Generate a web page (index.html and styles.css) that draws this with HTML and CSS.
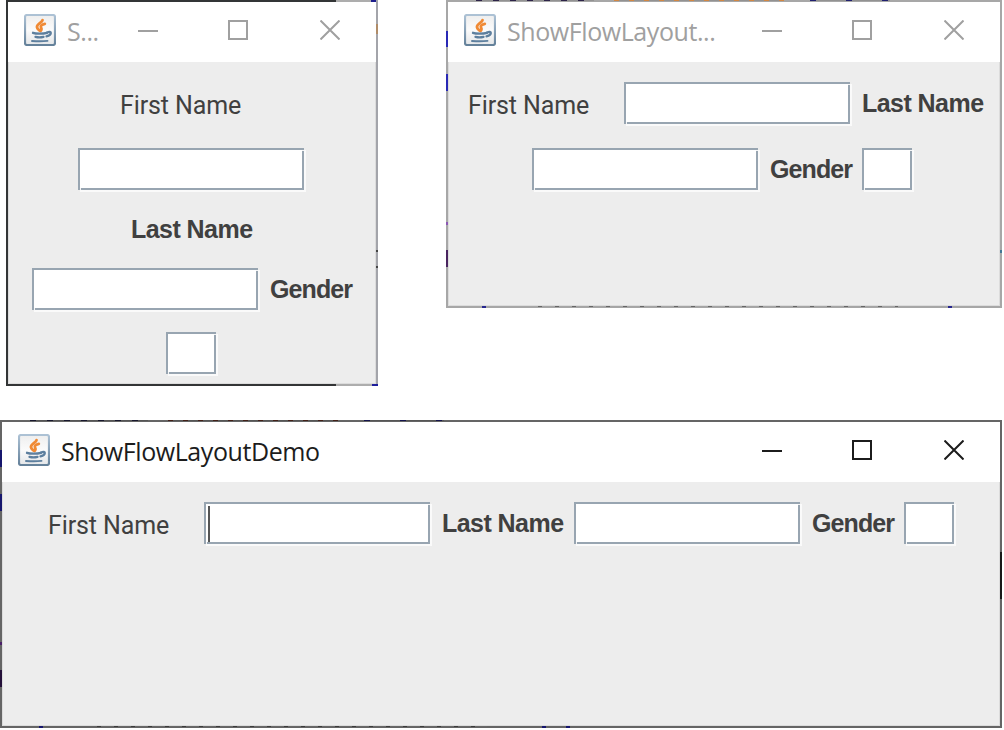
FILE: index.html
```html
<!DOCTYPE html>
<html lang="en">
<head>
<meta charset="utf-8">
<title>ShowFlowLayoutDemo</title>
<link rel="stylesheet" href="styles.css">
</head>
<body>
<svg class="defs" width="0" height="0">
  <defs>
    <linearGradient id="tile" x1="0" y1="0" x2="0" y2="1"><stop offset="0" stop-color="#eeeeee"/><stop offset=".5" stop-color="#fbfbfb"/><stop offset="1" stop-color="#e4e6e8"/></linearGradient>
    <linearGradient id="rim" x1="0" y1="0" x2="0" y2="1"><stop offset="0" stop-color="#adc2d5"/><stop offset="1" stop-color="#64819a"/></linearGradient>
    <symbol id="java" viewBox="0 0 32 32">
      <rect x="1" y="1" width="30" height="30" rx="2" fill="url(#tile)" stroke="url(#rim)" stroke-width="2.2"/>
      <g fill="none" stroke="#f08a35" stroke-width="2.8" stroke-linecap="round">
        <path d="M18.500 6.200C18 8.800 12.500 10.200 13 13.200C13.200 14.600 14.500 15.500 15.500 16.500"/>
        <path d="M20.800 9.800C18 10.400 16.200 12 17 13.500C17.800 14.800 17.500 16 16.500 17"/>
      </g>
      <g fill="none" stroke="#5d7f9e" stroke-width="2.300" stroke-linecap="round">
        <path d="M9 18.800C12 19.900 19 19.900 23 18.800"/>
        <path d="M11.500 22.800C14 23.400 17 23.400 19.500 22.800"/>
        <path d="M23 18.500C28 16.200 28.300 20.800 22.500 22.300"/>
        <path d="M8 27C12 27.300 20 27.300 23.500 26.900" stroke-width="1.900"/>
      </g>
    </symbol>
    <symbol id="min" viewBox="0 0 20 20"><path d="M0 11H20" stroke="currentColor" stroke-width="2"/></symbol>
    <symbol id="max" viewBox="0 0 20 20"><rect x="1" y="1" width="18" height="18" fill="none" stroke="currentColor" stroke-width="2"/></symbol>
    <symbol id="close" viewBox="0 0 20 20"><path d="M.5 .5L19.500 19.500M19.500 .5L.5 19.500" fill="none" stroke="currentColor" stroke-width="2"/></symbol>
  </defs>
</svg>
<main class="desktop">
  <div class="top">
    <section class="window narrow">
      <header class="titlebar"><svg class="logo"><use href="#java"/></svg><span class="title short">S...</span>
        <div class="controls"><svg><use href="#min"/></svg><svg><use href="#max"/></svg><svg><use href="#close"/></svg></div></header>
      <div class="content">
        <div class="row n1"><span class="label plain">First Name</span></div>
        <div class="row n2"><span class="field"></span></div>
        <div class="row n3"><span class="label last">Last Name</span></div>
        <div class="row n4"><span class="field"></span><span class="label gender">Gender</span></div>
        <div class="row n5"><span class="field small"></span></div>
      </div>
    </section>
    <section class="window medium">
      <header class="titlebar"><svg class="logo"><use href="#java"/></svg><span class="title">ShowFlowLayout...</span>
        <div class="controls"><svg><use href="#min"/></svg><svg><use href="#max"/></svg><svg><use href="#close"/></svg></div></header>
      <div class="content">
        <div class="row m1"><span class="label plain">First Name</span><span class="field"></span><span class="label last">Last Name</span></div>
        <div class="row m2"><span class="field"></span><span class="label gender">Gender</span><span class="field small"></span></div>
      </div>
    </section>
  </div>
  <section class="window wide">
    <header class="titlebar"><svg class="logo"><use href="#java"/></svg><span class="title">ShowFlowLayoutDemo</span>
      <div class="controls"><svg><use href="#min"/></svg><svg><use href="#max"/></svg><svg><use href="#close"/></svg></div></header>
    <div class="content">
      <div class="row w1"><span class="label plain">First Name</span><span class="field focused"></span><span class="label last">Last Name</span><span class="field"></span><span class="label gender">Gender</span><span class="field small"></span></div>
    </div>
  </section>
</main>
</body>
</html>
```
FILE: styles.css
```css
* { box-sizing: border-box; }
body { margin: 0; background: #fff; overflow: hidden; }
.defs { display: block; height: 0; }
.desktop { width: 1004px; height: 730px; display: flex; flex-direction: column; }
.top { display: flex; align-items: flex-start; height: 420px; padding-left: 6px; gap: 68px; }

.window { display: flex; flex-direction: column; padding: 2px; flex: none; }
.narrow {
  width: 372px; height: 386px; color: #a0a0a0;
  background:
    linear-gradient(#1d1d8c, #1d1d8c) 365px 0 / 5px 2px no-repeat,
    linear-gradient(#1d1d9c, #1d1d9c) 366px 384px / 6px 2px no-repeat,
    linear-gradient(#b08c68, #b08c68) 370px 24px / 2px 10px no-repeat,
    linear-gradient(#444, #444) 370px 250px / 2px 2px no-repeat,
    linear-gradient(#444, #444) 370px 266px / 2px 2px no-repeat,
    linear-gradient(#a3a4aa, #a3a4aa) 370px 0 / 2px 386px no-repeat,
    linear-gradient(90deg, #333536 330px, #adadad 330px);
}
.medium {
  width: 556px; height: 308px; color: #a0a0a0;
  background:
    linear-gradient(#2929b5, #2929b5) 0 31px / 2px 16px no-repeat,
    linear-gradient(#2929b5, #2929b5) 0 74px / 2px 17px no-repeat,
    linear-gradient(#8c58b4, #8c58b4) 0 222px / 2px 3px no-repeat,
    linear-gradient(#49245f, #49245f) 0 250px / 2px 17px no-repeat,
    linear-gradient(#427795, #427795) 554px 250px / 2px 3px no-repeat,
    linear-gradient(#27278f, #27278f) 36px 306px / 4px 2px no-repeat,
    linear-gradient(#27278f, #27278f) 502px 306px / 4px 2px no-repeat,
    repeating-linear-gradient(90deg, #666 0 4px, #a5a5a5 4px 17px) 92px 306px / 360px 1px no-repeat,
    repeating-linear-gradient(90deg, #2d2348 0 6px, #929292 6px 17px) 30px 0 / 118px 1px no-repeat,
    repeating-linear-gradient(90deg, #d28743 0 5px, #929292 5px 15px) 168px 0 / 170px 1px no-repeat,
    repeating-linear-gradient(90deg, #20206f 0 6px, #929292 6px 36px) 364px 0 / 80px 1px no-repeat,
    #a7a7a7;
}
.wide {
  width: 1002px; height: 308px; color: #1c1c1c;
  background:
    linear-gradient(#16166d, #16166d) 0 30px / 2px 17px no-repeat,
    linear-gradient(#16166d, #16166d) 0 74px / 2px 17px no-repeat,
    linear-gradient(#4b2069, #4b2069) 0 222px / 2px 3px no-repeat,
    linear-gradient(#241039, #241039) 0 250px / 2px 17px no-repeat,
    linear-gradient(#191919, #191919) 1000px 132px / 2px 47px no-repeat,
    linear-gradient(#16166d, #16166d) 39px 306px / 4px 2px no-repeat,
    linear-gradient(#16166d, #16166d) 542px 306px / 4px 2px no-repeat,
    linear-gradient(#16166d, #16166d) 566px 306px / 4px 2px no-repeat,
    repeating-linear-gradient(90deg, #3c3c3c 0 4px, #686868 4px 17px) 97px 306px / 390px 1px no-repeat,
    repeating-linear-gradient(90deg, #17172d 0 6px, #555 6px 17px) 30px 0 / 118px 1px no-repeat,
    repeating-linear-gradient(90deg, #432017 0 5px, #555 5px 15px) 168px 0 / 170px 1px no-repeat,
    repeating-linear-gradient(90deg, #14144d 0 6px, #555 6px 36px) 364px 0 / 80px 1px no-repeat,
    #656565;
}

.titlebar { height: 60px; flex: none; display: flex; align-items: center; padding: 0 0 4px 16px; background: #fff; }
.logo { width: 32px; height: 32px; flex: none; }
.title { padding: 1px 0 0 11px; font: 25px/32px "Open Sans", "Noto Sans", sans-serif; white-space: nowrap; letter-spacing: -0.42px; }
.controls { display: flex; margin-left: auto; }
.controls svg { width: 20px; height: 20px; margin: 0 36px; flex: none; }
.controls svg:first-child { margin-right: 34px; }
.narrow .title { width: 44px; margin-right: -10px; }

.content { flex: 1; background: #ededed; box-shadow: inset -1px -1px #dcdcdc, inset 1px 0 #dcdcdc; }
.row { display: flex; height: 42px; }
.n1 { margin-top: 20px; padding-left: 110px; }
.n2 { margin-top: 24px; padding-left: 70px; }
.n3 { margin-top: 18px; padding-left: 111px; }
.n4 { margin-top: 18px; padding-left: 24px; }
.n5 { margin-top: 22px; padding-left: 158px; }
.m1 { margin-top: 20px; padding-left: 18px; }
.m2 { margin-top: 24px; padding-left: 84px; }
.w1 { margin-top: 20px; padding-left: 44px; }

.label { flex: none; white-space: nowrap; color: #404040; }
.plain { width: 158px; padding-left: 2px; font: 25px/48px Roboto, sans-serif; letter-spacing: -0.1px; }
.last, .gender { padding-left: 12px; font: bold 25px/42px "Liberation Sans", Arial, sans-serif; }
.last { width: 144px; letter-spacing: -0.55px; }
.gender { width: 104px; letter-spacing: -0.9px; }

.field { position: relative; flex: none; width: 226px; height: 42px; background: #fff; border: 2px solid #98a5b1; box-shadow: 2px 2px 0 #fafafa; }
.small { width: 50px; }
.field::before, .field::after { content: ""; position: absolute; background: #f4f5f6; }
.field::before { right: -2px; top: 0; width: 2px; height: 1px; }
.field::after { left: 0; bottom: -2px; width: 1px; height: 2px; }
.focused { background: linear-gradient(#555, #555) 2px 2px / 2px 36px no-repeat #fff; }
```
